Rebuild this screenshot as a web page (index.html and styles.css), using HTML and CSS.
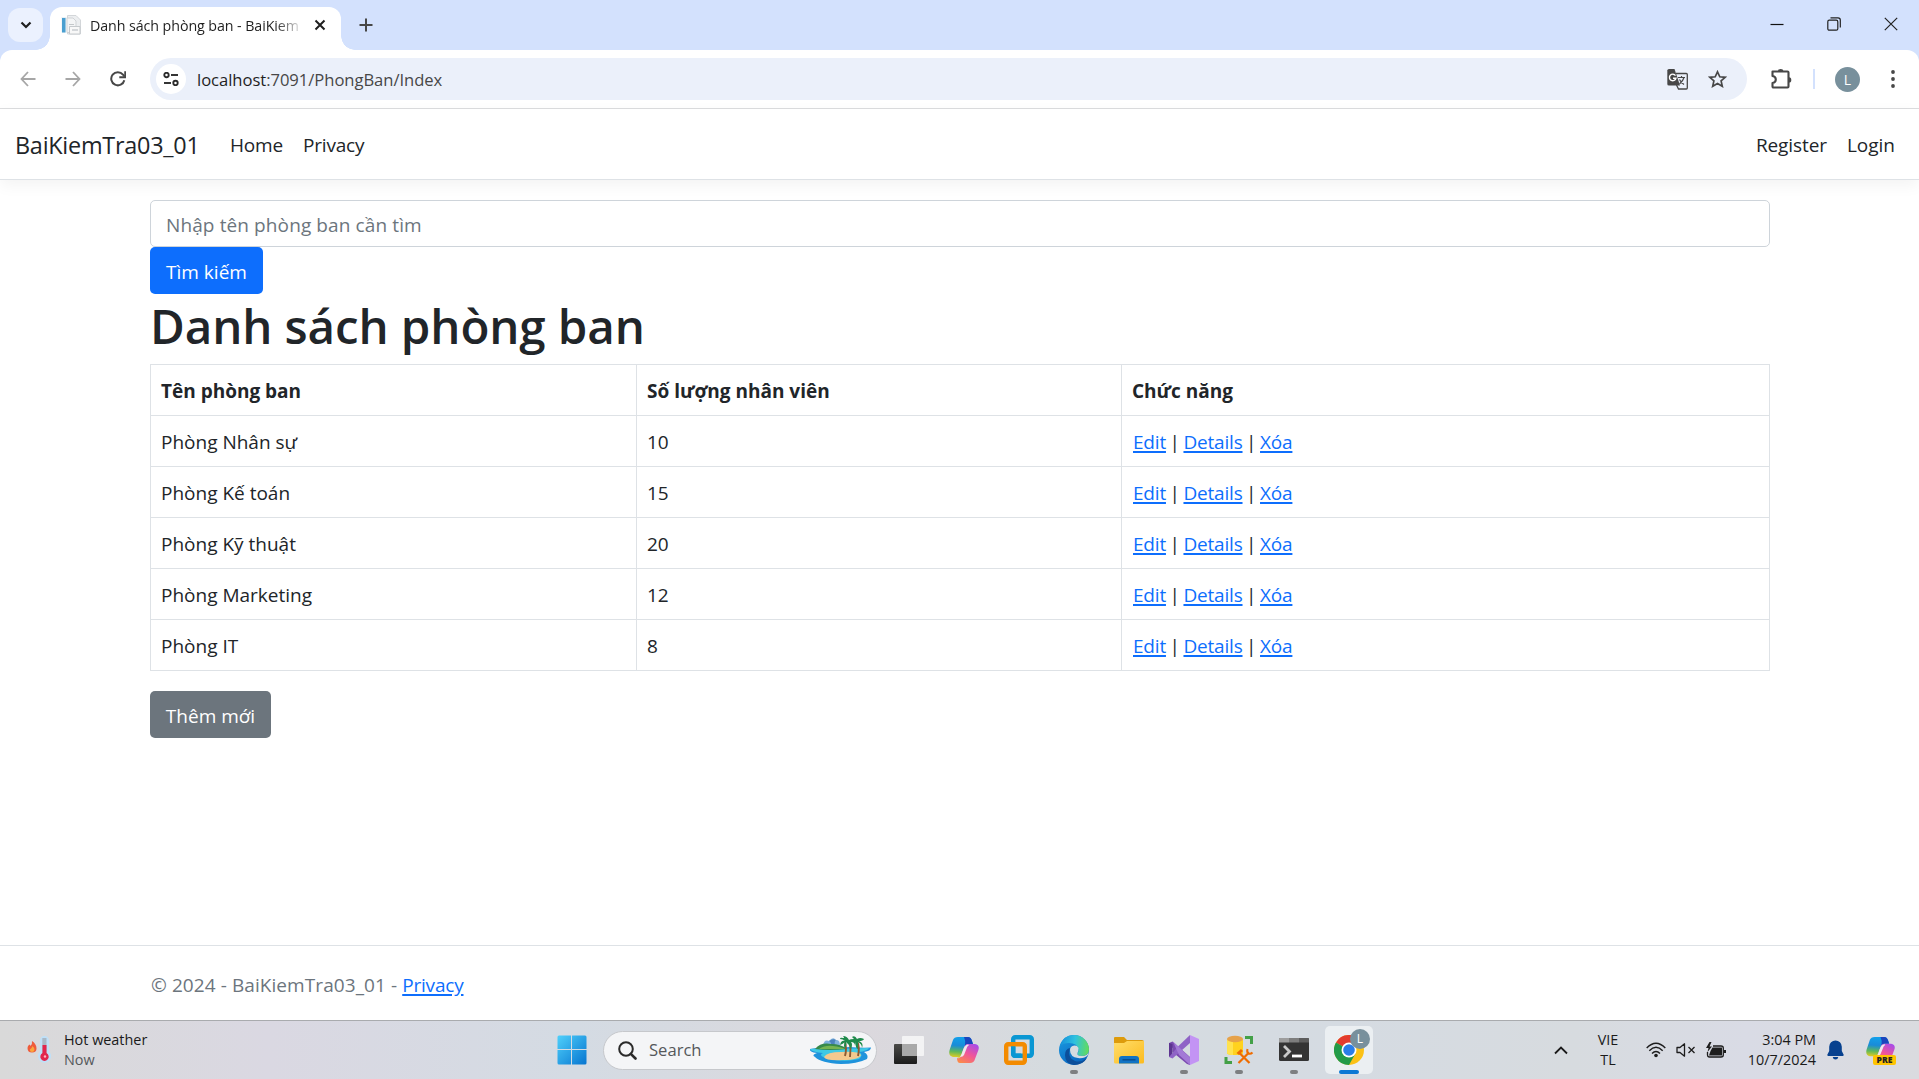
FILE: index.html
```
<!DOCTYPE html>
<html lang="vi">
<head>
<meta charset="utf-8">
<title>Danh sách phòng ban - BaiKiemTra03_01</title>
<link rel="stylesheet" href="styles.css">
</head>
<body>
<svg class="defs" aria-hidden="true">
  <defs>
    <linearGradient id="win" x1="0" y1="0" x2="1" y2="1"><stop offset="0" stop-color="#4fd0fb"/><stop offset="1" stop-color="#0675d0"/></linearGradient>
    <linearGradient id="cpl" x1="0.3" y1="0" x2="0.2" y2="1"><stop offset="0" stop-color="#12a0ea"/><stop offset=".4" stop-color="#1a8bd8"/><stop offset=".7" stop-color="#5fb85b"/><stop offset="1" stop-color="#f2cf1c"/></linearGradient>
    <linearGradient id="cpr" x1="0.8" y1="0" x2="0.2" y2="1"><stop offset="0" stop-color="#a84be8"/><stop offset=".5" stop-color="#f0559a"/><stop offset="1" stop-color="#fb8a4a"/></linearGradient>
    <linearGradient id="edgeTop" x1="0" y1="0.4" x2="1" y2="0.5"><stop offset="0" stop-color="#1690dc"/><stop offset=".5" stop-color="#2fc2df"/><stop offset="1" stop-color="#62dc5c"/></linearGradient>
    <linearGradient id="edgeMid" x1="0" y1="0" x2="0.6" y2="1"><stop offset="0" stop-color="#1b9de2"/><stop offset="1" stop-color="#0a66c0"/></linearGradient>
    <linearGradient id="fold" x1="0" y1="0" x2="1" y2="1"><stop offset="0" stop-color="#ffdd6a"/><stop offset="1" stop-color="#fcbb1e"/></linearGradient>
    <linearGradient id="tv" x1="0" y1="0" x2="0" y2="1"><stop offset="0" stop-color="#4a4a48"/><stop offset="1" stop-color="#1c1c1c"/></linearGradient>
    <symbol id="copilot" viewBox="0 0 30 28">
      <path d="M9 1H19Q22 1 23 5L24 8H19Q16 8 15 12L12 20Q11 23 8 21H4Q-1 20 .6 14L4 4Q5 1 9 1Z" fill="url(#cpl)"/>
      <path d="M15 1H19Q22 1 23 5L24 8H19Q17 8 16 10Q17 5 15 1Z" fill="#1b45bd"/>
      <path d="M21 27H11Q8 27 8 22Q11 23 12 20L15 12Q16 8 19 8H26Q31 9 29.400 14L26 23Q25 27 21 27Z" fill="url(#cpr)"/>
      <path d="M14 14Q15.500 9 19 8.500L20 9Q18 10 17 14L15 19Q14 21 11 21Q12.500 19 14 14Z" fill="#efe9ee"/>
    </symbol>
  </defs>
</svg>

<div class="tabstrip">
  <div class="tabsearch"><svg width="12" height="8" viewBox="0 0 12 8"><path d="M1.500 1.500L6 6L10.500 1.500" fill="none" stroke="#1f1f1f" stroke-width="2.200"/></svg></div>
  <div class="tab">
    <svg class="favicon" width="20" height="20" viewBox="0 0 20 20">
      <rect x="0.500" y="2" width="5" height="15.500" fill="#e7f0f6"/><rect x="1" y="3" width="3.500" height="14.500" fill="#4a9fd0"/>
      <path d="M6.500 .5H15L19.500 5V19H6.500Z" fill="#eceef0" stroke="#d3d6d9"/><path d="M6 3H12L15 6V17.500H6Z" fill="#f4f5f6" stroke="#d0d3d6"/>
      <path d="M8 9.500H13M8 12H13" stroke="#c3c7ca"/><path d="M8.500 11.500H19V19H8.500Z" fill="#f8f8f8" stroke="#c6cacd"/><path d="M11 15H17" stroke="#c9cdd0" stroke-width="1.500"/>
    </svg>
    <span class="tabtitle">Danh sách phòng ban - BaiKiem</span>
    <svg class="tabclose" width="12" height="12" viewBox="0 0 12 12"><path d="M1.500 1.500L10.500 10.500M10.500 1.500L1.500 10.500" stroke="#1f1f1f" stroke-width="2"/></svg>
  </div>
  <svg class="newtab" width="14" height="14" viewBox="0 0 14 14"><path d="M7 .5V13.500M.5 7H13.500" stroke="#474747" stroke-width="2"/></svg>
  <div class="winbtns">
    <svg width="14" height="14" viewBox="0 0 14 14"><path d="M.5 7.500H13.500" stroke="#111" stroke-width="1.200"/></svg>
    <svg width="14" height="14" viewBox="0 0 14 14"><rect x=".8" y="3.200" width="10" height="10" rx="1.500" fill="none" stroke="#222" stroke-width="1.200"/><path d="M3.500 .8H11Q13.300 .8 13.300 3V10.500" fill="none" stroke="#222" stroke-width="1.200"/></svg>
    <svg width="14" height="14" viewBox="0 0 14 14"><path d="M.8 .8L13.200 13.200M13.200 .8L.8 13.200" stroke="#222" stroke-width="1.200"/></svg>
  </div>
</div>

<div class="toolbar-bg">
<div class="toolbar">
  <svg class="back" width="16" height="16" viewBox="0 0 16 16"><path d="M8 1L1.500 8L8 15M1.500 8H15.500" fill="none" stroke="#a6a6a6" stroke-width="1.800"/></svg>
  <svg class="fwd" width="16" height="16" viewBox="0 0 16 16"><path d="M8 1L14.500 8L8 15M14.500 8H.5" fill="none" stroke="#a6a6a6" stroke-width="1.800"/></svg>
  <svg class="reload" width="16" height="16" viewBox="0 0 16 16"><path d="M14.300 9.200A6.600 6.600 0 1 1 13 3.600L14.500 5.500" fill="none" stroke="#474747" stroke-width="2"/><path d="M15.200 .3V6.300H9.300" fill="none" stroke="#474747" stroke-width="1.900"/></svg>
  <div class="omnibox">
    <div class="siteinfo"><svg width="16" height="14" viewBox="0 0 16 14"><g fill="none" stroke="#2b2b2b" stroke-width="1.900"><circle cx="3.500" cy="3" r="2.200"/><path d="M8 3H15"/><circle cx="12.500" cy="11" r="2.200"/><path d="M1 11H8"/></g></svg></div>
    <span class="url">localhost<span class="path">:7091/PhongBan/Index</span></span>
    <svg class="translate" width="21" height="21" viewBox="0 0 21 21"><path d="M9 4.500H19.300Q20.300 4.500 20.300 5.500V19Q20.300 20 19.300 20H11.500L9.500 16" fill="none" stroke="#474747" stroke-width="1.300"/><path d="M2 0H7.500L13 16.500H2Q.3 16.500 .3 15V1.500Q.3 0 2 0Z" fill="#474747"/><path d="M8.500 6.600A3.300 3.300 0 1 0 9 9.200H6" fill="none" stroke="#fff" stroke-width="1.400"/><path d="M11 8.500H18M14.500 7V8.500M17 8.500Q16 12 12.500 15M12.500 10.500Q14 13.500 17 15.500" fill="none" stroke="#474747" stroke-width="1.200"/></svg>
    <svg class="star" width="19" height="18" viewBox="0 0 19 18"><path d="M9.500 1.800L11.800 6.800L17.200 7.300L13.100 10.900L14.300 16.300L9.500 13.400L4.700 16.300L5.900 10.900L1.800 7.300L7.200 6.800Z" fill="none" stroke="#474747" stroke-width="1.700"/></svg>
  </div>
  <svg class="ext" width="21" height="20" viewBox="0 0 21 20"><path d="M1.500 2.500H16.500Q17.500 2.500 17.500 3.500V17.500Q17.500 18.500 16.500 18.500H2.500Q1.500 18.500 1.500 17.500V14Q4.800 13.500 4.800 10.500T1.500 7Z" fill="none" stroke="#474747" stroke-width="2.100" stroke-linejoin="round"/><path d="M7 2A2.700 2 0 0 1 12.400 2ZM18 8.200A2.300 2.700 0 0 1 18 13.600Z" fill="#474747"/></svg>
  <div class="divider"></div>
  <div class="avatar">L</div>
  <svg class="menu" width="4" height="18" viewBox="0 0 4 18"><g fill="#474747"><circle cx="2" cy="2" r="1.900"/><circle cx="2" cy="9" r="1.900"/><circle cx="2" cy="16" r="1.900"/></g></svg>
</div>
</div>

<header class="navbar">
  <a class="brand">BaiKiemTra03_01</a>
  <a class="navlink home">Home</a>
  <a class="navlink">Privacy</a>
  <a class="navlink register">Register</a>
  <a class="navlink login">Login</a>
</header>

<main class="container">
  <input class="search-input" type="text" placeholder="Nhập tên phòng ban cần tìm">
  <button class="btn primary">Tìm kiếm</button>
  <h1>Danh sách phòng ban</h1>
  <table>
    <thead><tr><th class="c1">Tên phòng ban</th><th class="c2">Số lượng nhân viên</th><th>Chức năng</th></tr></thead>
    <tbody>
      <tr><td>Phòng Nhân sự</td><td>10</td><td class="actions"><a>Edit</a> | <a>Details</a> | <a>Xóa</a></td></tr>
      <tr><td>Phòng Kế toán</td><td>15</td><td class="actions"><a>Edit</a> | <a>Details</a> | <a>Xóa</a></td></tr>
      <tr><td>Phòng Kỹ thuật</td><td>20</td><td class="actions"><a>Edit</a> | <a>Details</a> | <a>Xóa</a></td></tr>
      <tr><td>Phòng Marketing</td><td>12</td><td class="actions"><a>Edit</a> | <a>Details</a> | <a>Xóa</a></td></tr>
      <tr><td>Phòng IT</td><td>8</td><td class="actions"><a>Edit</a> | <a>Details</a> | <a>Xóa</a></td></tr>
    </tbody>
  </table>
  <button class="btn secondary">Thêm mới</button>
</main>

<footer class="footer">© 2024 - BaiKiemTra03_01 - <a>Privacy</a></footer>

<div class="taskbar">
  <div class="weather">
    <svg width="25" height="30" viewBox="0 0 25 30">
      <path d="M5 6Q9.500 9 9.500 13.500Q9.500 17.500 5 17.500T.5 13Q.5 10.500 2.500 9.500Q3.500 10 3.500 11Q5.500 9 5 6Z" fill="#ef5b3a"/><path d="M5.500 11Q7.800 13 7.500 15Q7 17 5 17T2.800 14.500Q4.500 14 5.500 11Z" fill="#fba63c"/>
      <path d="M13 5.500A4.500 4.500 0 0 1 22 5.500V16.500A6.500 6.500 0 1 1 13 16.500Z" fill="#bfe0f8"/><rect x="15.300" y="3" width="4.200" height="16" fill="#a9b8c6"/><path d="M15.500 10H19.500V18A4.200 4.200 0 1 1 15.500 18Z" fill="#e2264d"/><circle cx="18" cy="21.500" r="1.200" fill="#ffb3c0"/>
    </svg>
    <div class="wtext"><div>Hot weather</div><div class="dim">Now</div></div>
  </div>
  <div class="apps">
    <div class="app"><svg width="30" height="30" viewBox="0 0 30 30"><path d="M2 .5H14V14H.5V2Q.5 .5 2 .5ZM15 .5H28Q29.500 .5 29.500 2V14H15ZM.5 15H14V29.500H2Q.5 29.500 .5 28ZM15 15H29.500V28Q29.500 29.500 28 29.500H15Z" fill="url(#win)"/></svg></div>
    <div class="pill">
      <svg width="19" height="19" viewBox="0 0 19 19"><circle cx="8" cy="8" r="6.800" fill="none" stroke="#2a2a2a" stroke-width="2"/><path d="M12.800 12.800L17.500 17.500" stroke="#2a2a2a" stroke-width="2.600" stroke-linecap="round"/></svg>
      <span>Search</span>
      <svg class="island" width="62" height="30" viewBox="0 0 62 30">
        <path d="M14 11Q15 4 20 6Q24 1 27 5Q31 4 31 11Z" fill="#7eb0dc"/><path d="M20 6Q23 8 22 11H26Q25 6 27 5Q24 3 20 6Z" fill="#4b83bd"/>
        <path d="M1 14Q10 12 20 14L40 12Q52 13 62 12.500Q62 16 55 17Q60 20 58 24Q48 29 32 29Q12 28 6 22Q2 20 8 18Q0 17 1 14Z" fill="#1f93dc"/>
        <path d="M1 14Q14 13 28 14L60 13Q58 16 50 17Q55 20 50 24Q34 28 16 23Q9 20 14 18Q3 17 1 14Z" fill="#3fc9e4"/>
        <path d="M6 14Q12 7 22 9Q32 9 38 14Q20 16 6 14Z" fill="#37894a"/><path d="M10 14Q16 10 24 11T36 14Z" fill="#76b451"/>
        <path d="M15 22Q18 17 32 17Q50 16 52 20Q50 25 34 25Q17 26 15 22Z" fill="#f4c98e"/>
        <path d="M36 21Q38 14 36 7M41 22Q42 14 41 8M49 21Q51 12 48 6" fill="none" stroke="#8a5a32" stroke-width="1.900"/>
        <path d="M36 6Q32 5 31 10Q34 9 36 7Q34 11 36 13Q38 9 37 7Q41 10 42 14Q44 9 42 7Q46 7 46 11L47 7Q46 13 49 14Q49 10 49 7Q53 9 53 13Q55 8 50 6Q54 6 55 4Q51 2 48 4Q46 0 43 2L45 4Q41 4 40 5Q38 1 34 1Q36 3 34 3Q31 2 31 4Q34 4 36 6Z" fill="#1f8b4c"/>
      </svg>
    </div>
    <div class="app"><svg width="30" height="30" viewBox="0 0 30 30"><rect y="9" width="23" height="20" rx="1" fill="url(#tv)"/><rect x="8" y="1" width="22" height="20" rx="1" fill="#f4f4f4" opacity=".95"/><rect x="8" y="9" width="15" height="12" fill="#a9a9a9"/></svg></div>
    <div class="app"><svg width="30" height="28"><use href="#copilot"/></svg></div>
    <div class="app"><svg width="30" height="30" viewBox="0 0 30 30"><rect x="9.200" y="2.200" width="18.600" height="18.600" rx="2" fill="none" stroke="#0a97d3" stroke-width="4.400"/><rect x="2.200" y="9.200" width="18.600" height="18.600" rx="2" fill="none" stroke="#f38b00" stroke-width="4.400"/><path d="M9.200 11.400V18.800Q9.200 20.800 11.200 20.800H17" fill="none" stroke="#0a97d3" stroke-width="4.400"/></svg></div>
    <div class="app run"><svg width="30" height="30" viewBox="0 0 30 30"><circle cx="15" cy="15" r="15" fill="url(#edgeMid)"/><path d="M1 11Q4 0 15 0A15 15 0 0 1 30 14Q30 21 23 21Q18 21 18.500 18Q20 17 19.500 14Q18 8 10 8Q4 8 1 11Z" fill="url(#edgeTop)"/><path d="M11 13Q8 23 16 26Q22 28 28 23Q24 30 15 30Q6 29 6 20Q6 14 11 13Z" fill="#0c4f9b"/><path d="M19.500 13A4.500 4.500 0 0 0 11 15Q11 22 19 23Q25 24 29 20L30 16Q29 21 23 21Q17.500 21 18.500 18Q19.700 16 19.500 13Z" fill="#d6dbe0"/></svg></div>
    <div class="app"><svg width="30" height="28" viewBox="0 0 30 28"><path d="M0 2Q0 1 1 1H10L13 4H28Q30 4 30 6V10H0Z" fill="#dd9b0c"/><path d="M0 7H10L13 5H30V26Q30 27.500 28.500 27.500H1.500Q0 27.500 0 26Z" fill="url(#fold)"/><path d="M5 27.500V23Q5 20 8 20H22Q25 20 25 23V27.500Z" fill="#1173c4"/><path d="M8.500 23.800H21.500" stroke="#0a4a8c" stroke-width="1.400"/></svg></div>
    <div class="app run"><svg width="30" height="30" viewBox="0 0 30 30"><path d="M0 8L3.500 6.500L21 22V30L18 29L3.500 17V13L0 10Z" fill="#7b4bb0"/><path d="M0 8L3.500 9V21L0 22Z" fill="#5d3490"/><path d="M0 22L3.500 23.500L21 8V0L10 10.500Z" fill="#8f63c6"/><path d="M4 6.500L21 22.500V30L10 20Z" fill="#a37ad6"/><path d="M21 0L30 4V26L21 30Z" fill="#c394f4"/></svg></div>
    <div class="app run"><svg width="30" height="30" viewBox="0 0 30 30"><path d="M3 4V18Q3 20 11 20T19 18V4Z" fill="#ffd21f"/><path d="M3 4V18Q4 20 9 20V4Z" fill="#ffe24f"/><ellipse cx="11" cy="4" rx="8" ry="3.200" fill="#e6a24a"/><path d="M21 2.500H27.500V9M2 22V27.500H8" fill="none" stroke="#43a047" stroke-width="3"/><path d="M15 17.500L25.500 28M25 17.500L14.500 28" stroke="#ef6c00" stroke-width="2.200"/><path d="M12.500 18L17 14L19 16L15 20Z" fill="#ef6c00"/><path d="M23.500 14Q22.500 17.500 24.500 18.500T28.500 17.500" fill="none" stroke="#ef6c00" stroke-width="2"/></svg></div>
    <div class="app run"><svg width="30" height="24" viewBox="0 0 30 24"><rect width="30" height="23" rx="1.500" fill="#343434"/><path d="M1 0H10V4.500H0V1Q0 0 1 0Z" fill="#9d9d9d"/><path d="M10 0H20V4.500H10Z" fill="#7d7d7d"/><path d="M20 0H29Q30 0 30 1V4.500H20Z" fill="#5d5d5d"/><path d="M5 8L10.500 13.500L5 19" fill="none" stroke="#c9c9c9" stroke-width="2.800"/><path d="M13 18H23" stroke="#fff" stroke-width="2.800"/></svg></div>
    <div class="app active"><svg width="30" height="30" viewBox="0 0 30 30"><circle cx="15" cy="15" r="15" fill="#fbc116"/><path d="M15 15L2 7.500A15 15 0 0 1 28 7.500Z" fill="#e33b2e"/><path d="M15 15L2 7.500A15 15 0 0 0 15 30L21.500 18.500Z" fill="#229a48"/><circle cx="15" cy="15" r="7.500" fill="#fff"/><circle cx="15" cy="15" r="5.800" fill="#2a7de9"/></svg><div class="badge">L</div></div>
  </div>
  <div class="tray">
    <svg width="14" height="9" viewBox="0 0 14 9"><path d="M1 7.500L7 1.500L13 7.500" fill="none" stroke="#1a1a1a" stroke-width="1.800"/></svg>
    <div class="lang"><div>VIE</div><div>TL</div></div>
    <svg class="wifi" width="20" height="16" viewBox="0 0 20 16"><g fill="none" stroke="#1d1d1d" stroke-width="1.400"><path d="M.7 6Q10-3.500 19.300 6M3.300 8.700Q10 1.800 16.700 8.700M6 11.400Q10 7.400 14 11.400"/></g><circle cx="10" cy="13.500" r="1.800" fill="#1d1d1d"/></svg>
    <svg class="sound" width="20" height="14" viewBox="0 0 20 14"><path d="M1 4.500H4L8.500 .8V13.200L4 9.500H1Z" fill="none" stroke="#1d1d1d" stroke-width="1.300" stroke-linejoin="round"/><path d="M12.500 4L18.500 10M18.500 4L12.500 10" stroke="#1d1d1d" stroke-width="1.300"/></svg>
    <svg class="batt" width="20" height="17" viewBox="0 0 20 17"><path d="M7 4H15Q17.300 4 17.300 6V13Q17.300 15 15 15H3.500Q1.500 15 1.500 13V10" fill="none" stroke="#1d1d1d" stroke-width="1.300"/><path d="M6.500 5.500H16V13.500H3L4.500 9Z" fill="#1d1d1d"/><path d="M18 8H20V11H18Z" fill="#1d1d1d"/><path d="M3.500 0L0 6H2.500L1.500 10L6 4.500H3.500L5.500 0Z" fill="#1d1d1d"/></svg>
    <div class="clock"><div>3:04 PM</div><div>10/7/2024</div></div>
    <svg class="bell" width="17" height="20" viewBox="0 0 17 20"><path d="M8.500 .5A6.300 6.300 0 0 1 14.800 6.800V11L16.700 14.800Q16.700 16 15.700 16H1.300Q.3 16 .3 14.800L2.200 11V6.800A6.300 6.300 0 0 1 8.500 .5ZM5.700 17H11.300Q10.800 19.500 8.500 19.500T5.700 17Z" fill="#08418f"/></svg>
    <div class="pre"><svg width="29" height="27"><use href="#copilot"/></svg><span>PRE</span></div>
  </div>
</div>
</body>
</html>
```
FILE: styles.css
```
* { box-sizing: border-box; }
body {
  margin: 0; width: 1919px; height: 1079px; overflow: hidden;
  display: flex; flex-direction: column;
  background: #fff; color: #212529;
  font: 400 19px/30px "Open Sans", "Noto Sans", sans-serif;
}
svg { display: block; flex: none; }
.defs { position: absolute; width: 0; height: 0; }

/* browser chrome */
.tabstrip { height: 50px; flex: none; background: #d3e1fd; display: flex; align-items: flex-start; }
.tabsearch { width: 35px; height: 34px; margin: 8px 0 0 8px; border-radius: 12px; background: #ebf1fe; display: flex; align-items: center; justify-content: center; }
.tab { position: relative; width: 291px; height: 43px; margin: 7px 0 0 7px; padding: 0 15px 7px 11px; border-radius: 12px 12px 0 0; background: #fff; display: flex; align-items: center; }
.tab::before, .tab::after { content: ""; position: absolute; bottom: 0; width: 14px; height: 14px; }
.tab::before { left: -14px; background: radial-gradient(circle at 0 0, transparent 13.5px, #fff 14px); }
.tab::after { right: -14px; background: radial-gradient(circle at 100% 0, transparent 13.5px, #fff 14px); }
.tabtitle { margin-left: 9px; padding-top: 2px; white-space: nowrap; font-size: 14.25px; letter-spacing: -.08px; line-height: 20px; color: #1f1f1f; -webkit-mask-image: linear-gradient(90deg, #000 185px, transparent 214px); mask-image: linear-gradient(90deg, #000 185px, transparent 214px); }
.tabclose { margin-left: auto; }
.newtab { margin: 18px 0 0 18px; }
.winbtns { margin: 17px 21px 0 auto; display: flex; gap: 43px; }
.toolbar-bg { flex: none; background: #d3e1fd; }
.toolbar { height: 59px; background: #fff; border-radius: 12px 12px 0 0; border-bottom: 1px solid #dcdddf; display: flex; align-items: center; }
.back { margin-left: 20px; }
.fwd { margin-left: 29px; }
.reload { margin-left: 29px; }
.omnibox { width: 1597px; height: 42px; margin-left: 24px; border-radius: 21px; background: #ebf0fa; display: flex; align-items: center; }
.siteinfo { width: 30px; height: 30px; margin-left: 6px; border-radius: 50%; background: #fff; display: flex; align-items: center; justify-content: center; }
.url { margin-left: 11px; padding-top: 2px; font-size: 16.6px; letter-spacing: -.04px; color: #1f1f1f; }
.path { color: #474747; }
.translate { margin-left: auto; }
.star { margin: 0 20px 0 20px; }
.ext { margin-left: 24px; }
.divider { width: 2px; height: 20px; margin-left: 21px; background: #d3e1fd; }
.avatar { width: 25px; height: 25px; margin-left: 20px; border-radius: 50%; background: #78909c; color: #fff; font-size: 14px; line-height: 25px; text-align: center; }
.menu { margin: 0 24px 0 auto; }

/* page */
.navbar { position: relative; height: 71px; flex: none; padding: 2px 24px 0 15px; border-bottom: 1px solid #dee2e6; background: #fff; box-shadow: 0 5px 15px rgba(0, 0, 0, .05); display: flex; align-items: center; }
.brand { font-size: 23.4px; letter-spacing: -.24px; width: 215px; }
.navlink { letter-spacing: -.2px; }
.home { width: 73px; }
.register { margin-left: auto; letter-spacing: -.1px; }
.login { margin-left: 20px; letter-spacing: 0; }
.container { flex: 1; padding: 20px 149px 0 150px; display: flex; flex-direction: column; align-items: flex-start; }
.search-input { width: 100%; height: 47px; flex: none; padding: 3px 15px 0; border: 1px solid #ced4da; border-radius: 5px; background: #fff; font: inherit; letter-spacing: .11px; }
.search-input::placeholder { color: #6c757d; opacity: 1; }
.btn { height: 47px; flex: none; padding: 2px 0 0; border: 0; border-radius: 5px; color: #fff; font: inherit; }
.primary { width: 113px; background: #0d6efd; }
.secondary { width: 121px; margin-top: 20px; background: #6c757d; }
h1 { margin: 0 0 8px; padding-top: 2px; font-size: 47.5px; font-weight: 550; line-height: 60px; letter-spacing: -.1px; }
table { width: 100%; border-collapse: collapse; table-layout: fixed; }
th, td { height: 51px; padding: 2px 10px 0; border: 1px solid #dee2e6; text-align: left; }
.c1 { width: 486px; }
.c2 { width: 485px; }
.actions { word-spacing: -1.4px; padding-left: 11px; }
td a, .footer a { color: #0d6efd; text-decoration: underline; text-decoration-thickness: 2px; text-underline-offset: 2px; letter-spacing: -.2px; }
.footer { height: 75px; flex: none; padding-left: 151px; border-top: 1px solid #dee2e6; line-height: 78px; letter-spacing: .08px; color: #6c757d; }

/* Windows taskbar */
.taskbar { height: 59px; flex: none; border-top: 1px solid #a9abae; background: linear-gradient(90deg, #d9d9d9, #dad8e2 14%, #d4dbe3 30%, #dbd8dd 45%, #d5dbdf 55%, #d5dbe2 70%, #d7dbdf 82%, #d9dbe5 91%, #dadbdf); display: flex; align-items: center; color: #1a1a1a; font-size: 14.4px; line-height: 20px; }
.weather { width: 548px; padding-left: 27px; display: flex; align-items: center; gap: 12px; }
.dim { color: #55585b; }
.apps { display: flex; align-items: center; gap: 7px; }
.app { position: relative; width: 48px; height: 48px; border-radius: 5px; display: flex; align-items: center; justify-content: center; }
.active { background: #ebeff2; }
.run::after, .active::after { content: ""; position: absolute; bottom: 0; left: 20px; width: 8px; height: 4px; border-radius: 2px; background: #7d7f81; }
.active::after { left: 14px; width: 20px; background: #0a78d4; }
.badge { position: absolute; right: 3px; top: 3px; width: 20px; height: 20px; border-radius: 50%; background: #78909c; color: #fff; font-size: 12px; line-height: 20px; text-align: center; }
.pill { width: 274px; height: 39px; margin-right: 1px; padding: 0 5px 0 14px; border-radius: 20px; border: 1px solid #c6c8cc; background: #f4f5f7; display: flex; align-items: center; gap: 12px; font-size: 16.6px; color: #55585b; }
.island { margin-left: auto; }
.tray { margin-left: auto; padding-right: 23px; display: flex; align-items: center; }
.lang { width: 40px; margin-left: 20px; text-align: center; }
.wifi { margin-left: 18px; }
.sound { margin-left: 10px; }
.batt { margin-left: 10px; }
.clock { width: 90px; text-align: right; white-space: nowrap; }
.bell { margin-left: 11px; }
.pre { position: relative; width: 30px; height: 29px; margin-left: 22px; }
.pre span { position: absolute; left: 7px; top: 19px; width: 23px; height: 10px; border-radius: 2px; background: #ffc400; color: #222; font-size: 8.5px; font-weight: 800; line-height: 10px; text-align: center; }
```
